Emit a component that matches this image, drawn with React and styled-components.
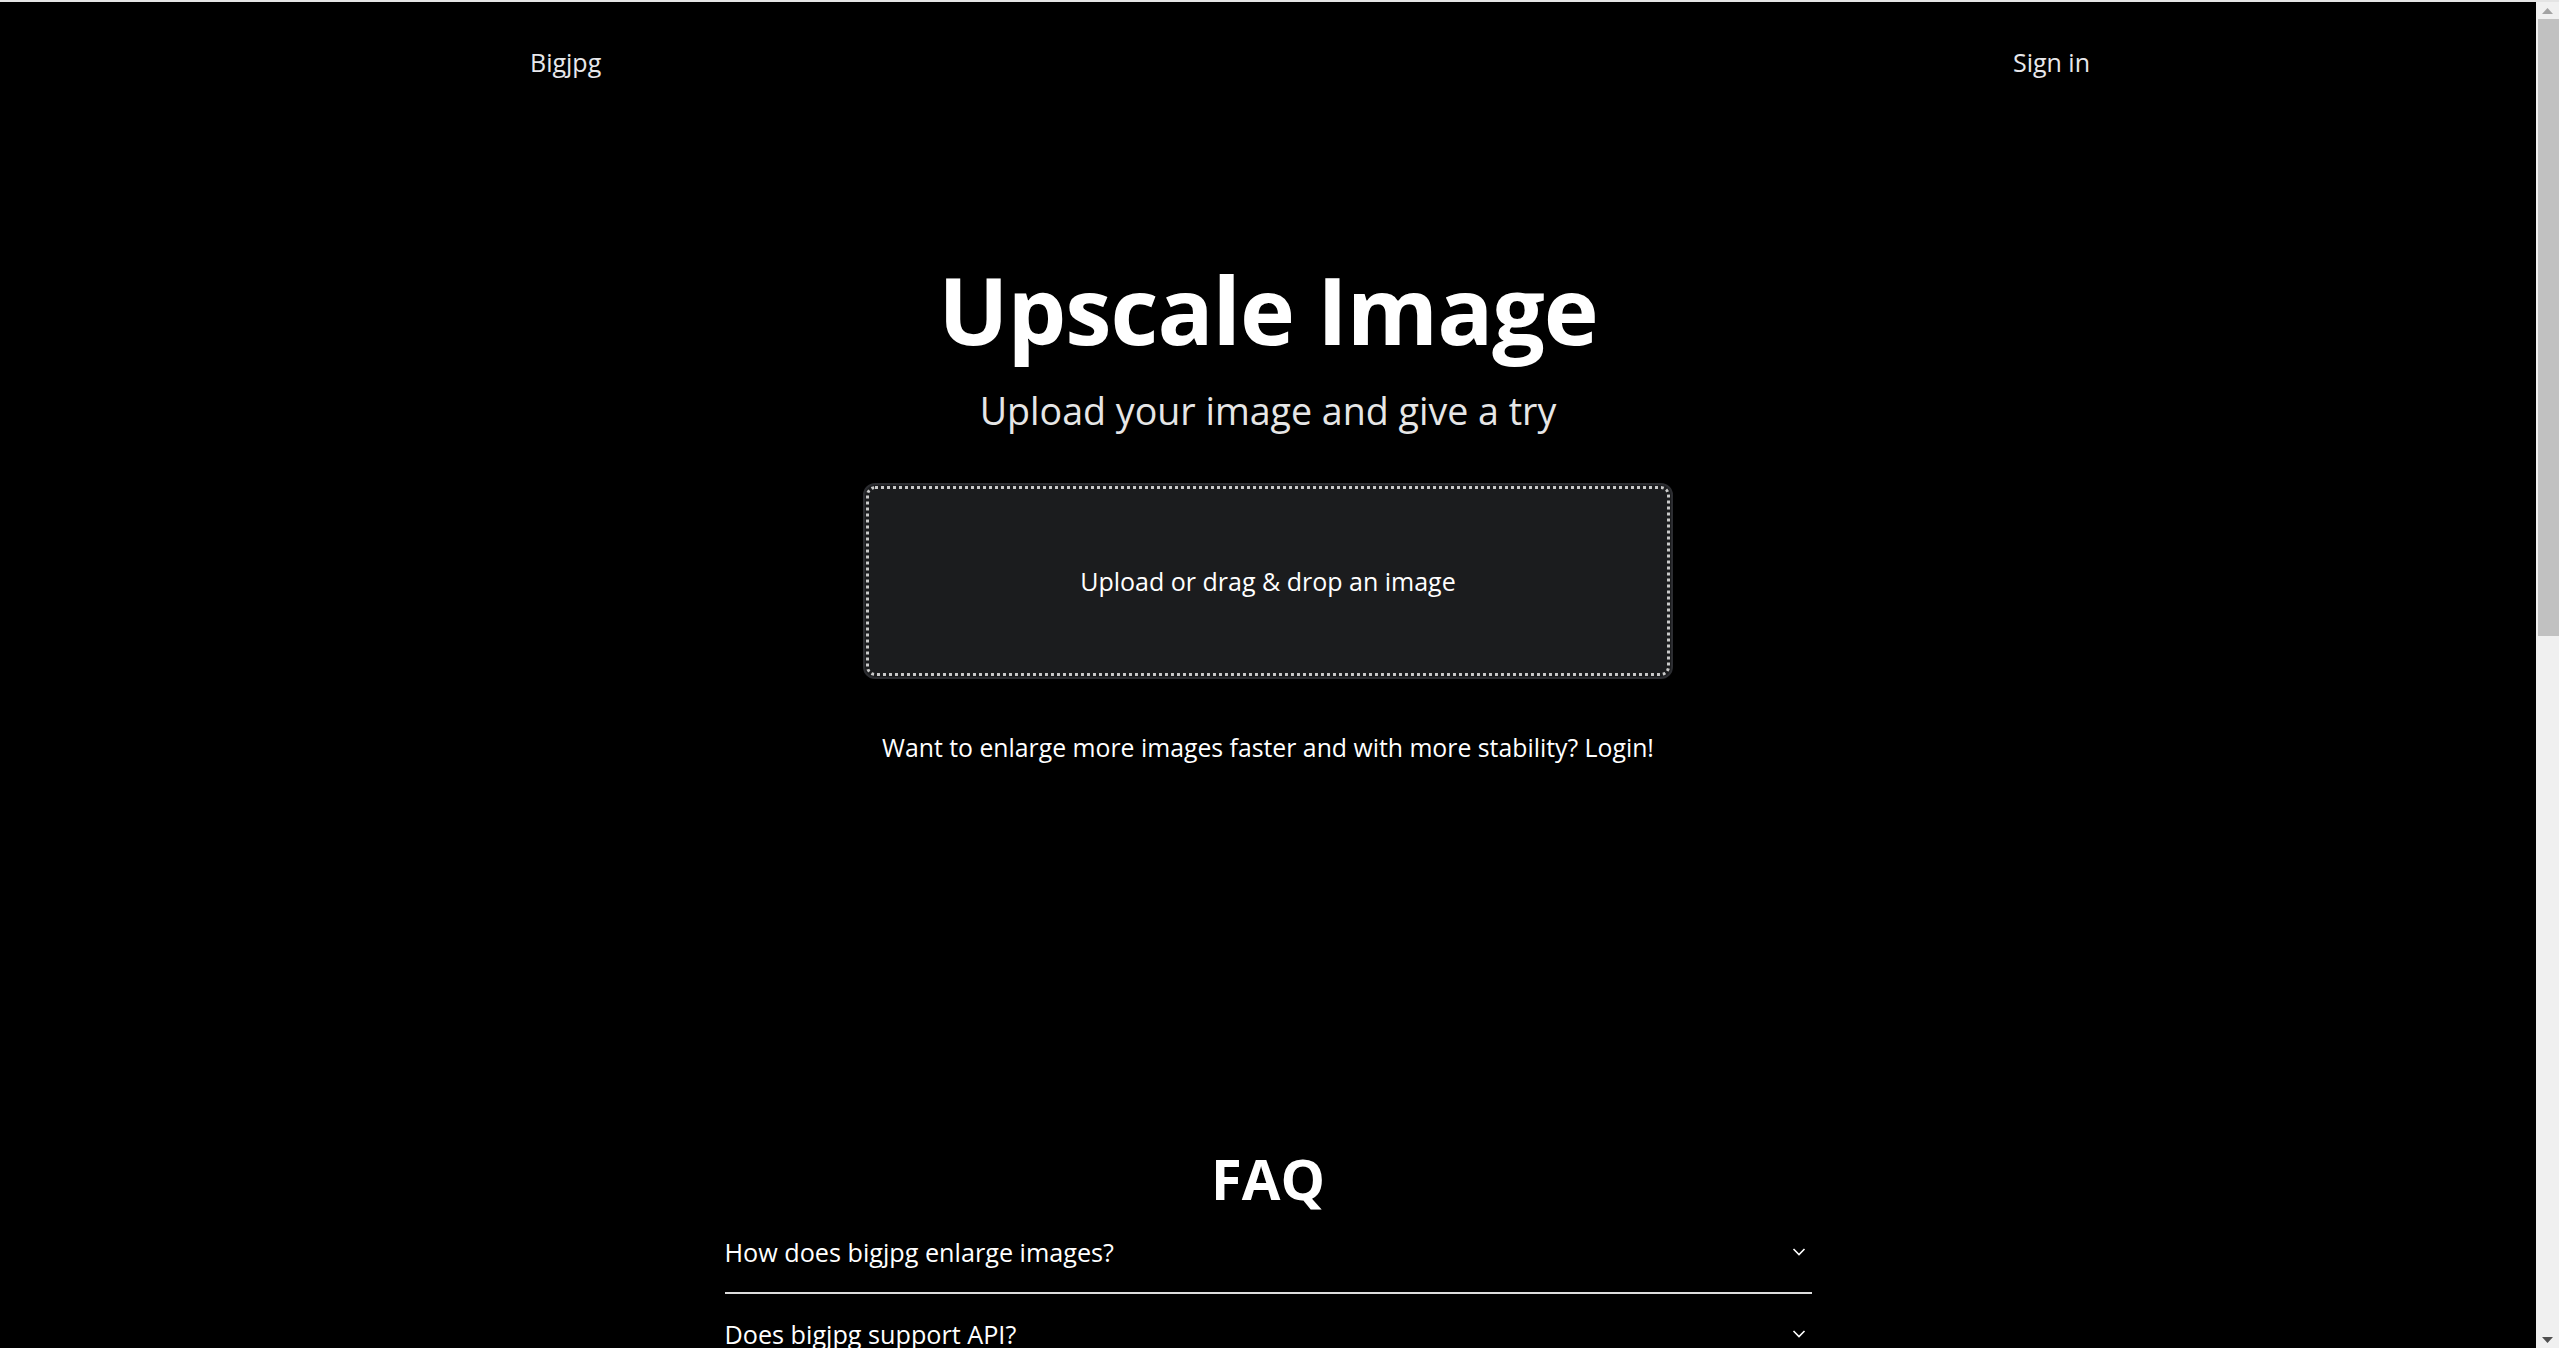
import React from "react";
import styled, { createGlobalStyle } from "styled-components";

const Global = createGlobalStyle`
  html, body {
    margin: 0;
    padding: 0;
    background: #000;
    overflow: hidden;
  }
  body {
    font-family: "Open Sans", "Noto Sans", "Liberation Sans", sans-serif;
    color: #fff;
    border-top: 2px solid #e4e4e4;
  }
`;

const Shell = styled.div`
  display: flex;
  height: 1346px;
  overflow: hidden;
`;

const Viewport = styled.main`
  flex: 1;
  min-width: 0;
  overflow: hidden;
`;

const ScrollBar = styled.aside`
  width: 23px;
  flex: none;
  display: flex;
  flex-direction: column;
  background: #f0f0f0;
`;

const ScrollButton = styled.div`
  height: 17px;
  flex: none;
  display: flex;
  align-items: center;
  justify-content: center;
`;

const ScrollTrack = styled.div`
  flex: 1;
  display: flex;
  flex-direction: column;
  padding: 0 0 0 2px;
`;

const ScrollThumb = styled.div`
  height: 617px;
  background: #c1c1c1;
`;

const Page = styled.div`
  display: flex;
  flex-direction: column;
  align-items: stretch;
`;

const Nav = styled.header`
  height: 120px;
  display: flex;
  align-items: center;
  justify-content: space-between;
  padding: 0 446px 0 530px;
`;

const NavLink = styled.a`
  font-size: 25px;
  color: #e8e8ec;
  text-decoration: none;
  line-height: 36px;
`;

const Hero = styled.section`
  display: flex;
  flex-direction: column;
  align-items: center;
  padding-top: 127px;
`;

const Title = styled.h1`
  margin: 0;
  font-size: 93px;
  font-weight: 700;
  line-height: 120px;
  letter-spacing: -1px;
`;

const Subtitle = styled.p`
  margin: 14px 0 0;
  font-size: 37.6px;
  line-height: 56px;
  color: #e6e6e6;
`;

const DropZone = styled.button`
  margin-top: 44px;
  width: 810px;
  height: 196px;
  box-sizing: border-box;
  background: #1b1c1e;
  border: 2px solid #2c2d31;
  border-radius: 12px;
  outline: 3px dotted #c9c9c9;
  outline-offset: -6px;
  color: #fff;
  font-family: inherit;
  font-size: 25px;
  line-height: 36px;
  cursor: pointer;
`;

const LoginHint = styled.p`
  margin: 48px 0 0;
  font-size: 24.8px;
  line-height: 40px;
`;

const Faq = styled.section`
  margin-top: 377px;
  display: flex;
  flex-direction: column;
  align-items: center;
`;

const FaqTitle = styled.h2`
  margin: 0;
  font-size: 56px;
  font-weight: 700;
  line-height: 68px;
`;

const FaqList = styled.div`
  width: 1087px;
  display: flex;
  flex-direction: column;
`;

const FaqItem = styled.div`
  display: flex;
  align-items: center;
  justify-content: space-between;
  padding: 20px 0;
  border-bottom: 2px solid ${(p) => (p.$last ? "transparent" : "#dcdcdc")};
`;

const Question = styled.span`
  font-size: 25.2px;
  line-height: 40px;
`;

const Chevron = styled.svg`
  width: 14px;
  height: 10px;
  margin-right: 6px;
  flex: none;
`;

const questions = [
  "How does bigjpg enlarge images?",
  "Does bigjpg support API?",
  "What is the difference between bigjpg and other software?",
  "What is the limit of image size?",
  "How long does it take to enlarge an image?",
  "Are my images safe?",
  "What is the best image type to enlarge?",
  "How can I get more quota?",
];

export default function App() {
  return (
    <>
      <Global />
      <Shell>
        <Viewport>
          <Page>
            <Nav>
              <NavLink href="#">Bigjpg</NavLink>
              <NavLink href="#">Sign in</NavLink>
            </Nav>
            <Hero>
              <Title>Upscale Image</Title>
              <Subtitle>Upload your image and give a try</Subtitle>
              <DropZone>Upload or drag &amp; drop an image</DropZone>
              <LoginHint>Want to enlarge more images faster and with more stability? Login!</LoginHint>
            </Hero>
            <Faq>
              <FaqTitle>FAQ</FaqTitle>
              <FaqList>
                {questions.map((q, i) => (
                  <FaqItem key={q} $last={i === questions.length - 1}>
                    <Question>{q}</Question>
                    <Chevron viewBox="0 0 14 10">
                      <polyline points="1.5,2 7,7.5 12.5,2" fill="none" stroke="#fff" strokeWidth="1.6" />
                    </Chevron>
                  </FaqItem>
                ))}
              </FaqList>
            </Faq>
          </Page>
        </Viewport>
        <ScrollBar>
          <ScrollButton>
            <svg width="11" height="6" viewBox="0 0 11 6">
              <polygon points="0,6 5.5,0 11,6" fill="#a3a3a3" />
            </svg>
          </ScrollButton>
          <ScrollTrack>
            <ScrollThumb />
          </ScrollTrack>
          <ScrollButton>
            <svg width="11" height="6" viewBox="0 0 11 6">
              <polygon points="0,0 5.5,6 11,0" fill="#505050" />
            </svg>
          </ScrollButton>
        </ScrollBar>
      </Shell>
    </>
  );
}
